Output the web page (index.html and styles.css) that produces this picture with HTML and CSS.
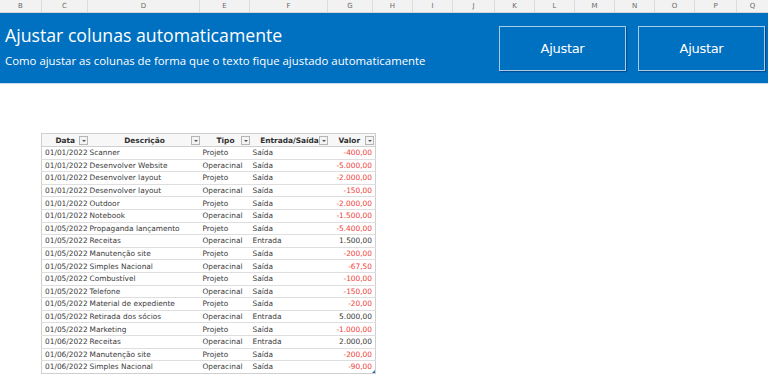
FILE: index.html
```html
<!DOCTYPE html>
<html lang="pt">
<head>
<meta charset="utf-8">
<link rel="stylesheet" href="styles.css">
</head>
<body>
<div class="colbar">
  <div class="col w42">B</div>
  <div class="col w46">C</div>
  <div class="col w112">D</div>
  <div class="col w50">E</div>
  <div class="col w78">F</div>
  <div class="col w45">G</div>
  <div class="col w40">H</div>
  <div class="col w40">I</div>
  <div class="col w42">J</div>
  <div class="col w40">K</div>
  <div class="col w40">L</div>
  <div class="col w40">M</div>
  <div class="col w40">N</div>
  <div class="col w40">O</div>
  <div class="col w42">P</div>
  <div class="col last">Q</div>
</div>
<header class="banner">
  <div class="titles">
    <h1 class="title">Ajustar colunas automaticamente</h1>
    <p class="subtitle">Como ajustar as colunas de forma que o texto fique ajustado automaticamente</p>
  </div>
  <div class="buttons">
    <div class="btn">Ajustar</div>
    <div class="btn">Ajustar</div>
  </div>
</header>
<main class="sheet">
  <table class="grid">
    <colgroup>
      <col class="c-data"><col class="c-desc"><col class="c-tipo"><col class="c-es"><col class="c-val">
    </colgroup>
    <thead>
      <tr>
        <th><span class="hd">Data</span><span class="dd"></span></th>
        <th><span class="hd">Descrição</span><span class="dd"></span></th>
        <th><span class="hd">Tipo</span><span class="dd"></span></th>
        <th><span class="hd">Entrada/Saída</span><span class="dd"></span></th>
        <th class="th-val"><span class="hd">Valor</span><span class="dd"></span></th>
      </tr>
    </thead>
    <tbody>
      <tr><td>01/01/2022</td><td>Scanner</td><td>Projeto</td><td>Saída</td><td class="num neg">-400,00</td></tr>
      <tr><td>01/01/2022</td><td>Desenvolver Website</td><td>Operacinal</td><td>Saída</td><td class="num neg">-5.000,00</td></tr>
      <tr><td>01/01/2022</td><td>Desenvolver layout</td><td>Projeto</td><td>Saída</td><td class="num neg">-2.000,00</td></tr>
      <tr><td>01/01/2022</td><td>Desenvolver layout</td><td>Operacinal</td><td>Saída</td><td class="num neg">-150,00</td></tr>
      <tr><td>01/01/2022</td><td>Outdoor</td><td>Projeto</td><td>Saída</td><td class="num neg">-2.000,00</td></tr>
      <tr><td>01/01/2022</td><td>Notebook</td><td>Operacinal</td><td>Saída</td><td class="num neg">-1.500,00</td></tr>
      <tr><td>01/05/2022</td><td>Propaganda lançamento</td><td>Projeto</td><td>Saída</td><td class="num neg">-5.400,00</td></tr>
      <tr><td>01/05/2022</td><td>Receitas</td><td>Operacinal</td><td>Entrada</td><td class="num">1.500,00</td></tr>
      <tr><td>01/05/2022</td><td>Manutenção site</td><td>Projeto</td><td>Saída</td><td class="num neg">-200,00</td></tr>
      <tr><td>01/05/2022</td><td>Simples Nacional</td><td>Operacinal</td><td>Saída</td><td class="num neg">-67,50</td></tr>
      <tr><td>01/05/2022</td><td>Combustível</td><td>Projeto</td><td>Saída</td><td class="num neg">-100,00</td></tr>
      <tr><td>01/05/2022</td><td>Telefone</td><td>Operacinal</td><td>Saída</td><td class="num neg">-150,00</td></tr>
      <tr><td>01/05/2022</td><td>Material de expediente</td><td>Projeto</td><td>Saída</td><td class="num neg">-20,00</td></tr>
      <tr><td>01/05/2022</td><td>Retirada dos sócios</td><td>Operacinal</td><td>Entrada</td><td class="num">5.000,00</td></tr>
      <tr><td>01/05/2022</td><td>Marketing</td><td>Projeto</td><td>Saída</td><td class="num neg">-1.000,00</td></tr>
      <tr><td>01/06/2022</td><td>Receitas</td><td>Operacinal</td><td>Entrada</td><td class="num">2.000,00</td></tr>
      <tr><td>01/06/2022</td><td>Manutenção site</td><td>Projeto</td><td>Saída</td><td class="num neg">-200,00</td></tr>
      <tr class="lastrow"><td>01/06/2022</td><td>Simples Nacional</td><td>Operacinal</td><td>Saída</td><td class="num neg">-90,00<span class="handle"></span></td></tr>
    </tbody>
  </table>
</main>
</body>
</html>
```
FILE: styles.css
```css
* { box-sizing: border-box; }
html, body { margin: 0; padding: 0; background: #ffffff; }
body { width: 768px; height: 380px; overflow: hidden; font-family: "DejaVu Sans", sans-serif; }

.colbar {
  display: flex;
  height: 13px;
  background: #f2f2f2;
  border-bottom: 1px solid #d4d4d4;
}
.col {
  flex: none;
  font-size: 7px;
  line-height: 12px;
  color: #6b6b6b;
  text-align: center;
  border-right: 1px solid #dcdcdc;
}
.col.last { flex: 1; border-right: none; }
.w40 { width: 40px; }
.w42 { width: 42px; }
.w45 { width: 45px; }
.w46 { width: 46px; }
.w50 { width: 50px; }
.w78 { width: 78px; }
.w112 { width: 112px; }

.banner {
  display: flex;
  justify-content: space-between;
  height: 71px;
  background: #0070c0;
  border-bottom: 1px solid #c3daef;
}
.titles { padding: 9px 0 0 5px; }
.title {
  margin: 0;
  font-family: "Open Sans", sans-serif;
  font-weight: 400;
  font-size: 17.7px;
  line-height: 26px;
  color: #ffffff;
}
.subtitle {
  margin: 5px 0 0;
  font-family: "Open Sans", sans-serif;
  font-size: 11.4px;
  line-height: 16px;
  color: #ffffff;
}
.buttons {
  display: flex;
  gap: 12px;
  padding: 13px 3px 0 0;
}
.btn {
  width: 127px;
  height: 45px;
  border: 1px solid #a9cbea;
  box-shadow: 1px 1px 1px rgba(0, 40, 90, 0.45);
  display: flex;
  align-items: center;
  justify-content: center;
  color: #ffffff;
  font-family: "DejaVu Sans", sans-serif;
  font-size: 13px;
  letter-spacing: -0.3px;
}

.sheet { padding: 49px 0 0 41px; }
.grid {
  border-collapse: collapse;
  table-layout: fixed;
  width: 334px;
  font-size: 7.4px;
  color: #3a3a3a;
}
.c-data { width: 47px; }
.c-desc { width: 112px; }
.c-tipo { width: 50px; }
.c-es { width: 78px; }
.c-val { width: 47px; }

.grid th {
  position: relative;
  height: 13px;
  padding: 0;
  font-weight: 700;
  color: #2f2f2f;
  text-align: center;
  background: #f7f7f7;
  border-top: 1px solid #cfcfcf;
  border-bottom: 1px solid #cfcfcf;
  white-space: nowrap;
}
.grid th:first-child { border-left: 1px solid #cfcfcf; }
.grid th:last-child { border-right: 1px solid #cfcfcf; }
.grid th.th-val .hd { padding-right: 5px; }
.dd {
  position: absolute;
  right: 1px;
  top: 2px;
  width: 9px;
  height: 9px;
  border: 1px solid #b5b5b5;
  background: #f4f4f4;
}
.dd::after {
  content: "";
  position: absolute;
  left: 2px;
  top: 3px;
  border-left: 2px solid transparent;
  border-right: 2px solid transparent;
  border-top: 2px solid #555;
}

.grid td {
  height: 12.6px;
  padding: 0 0 0 2px;
  line-height: 11px;
  white-space: nowrap;
  overflow: visible;
  border-bottom: 1px solid #dedede;
}
.grid td:first-child { border-left: 1px solid #cfcfcf; padding-left: 3px; }
.grid td:last-child { border-right: 1px solid #cfcfcf; }
.grid td:nth-child(2) { padding-left: 1px; }
.grid td.num { text-align: right; padding: 0 3px 0 0; position: relative; }
.grid td.neg { color: #f0423a; }
.grid tr.lastrow td { border-bottom: 1px solid #cfcfcf; }
.handle {
  position: absolute;
  right: 0;
  bottom: 0;
  border-left: 3px solid transparent;
  border-bottom: 3px solid #2f6db5;
}
```
